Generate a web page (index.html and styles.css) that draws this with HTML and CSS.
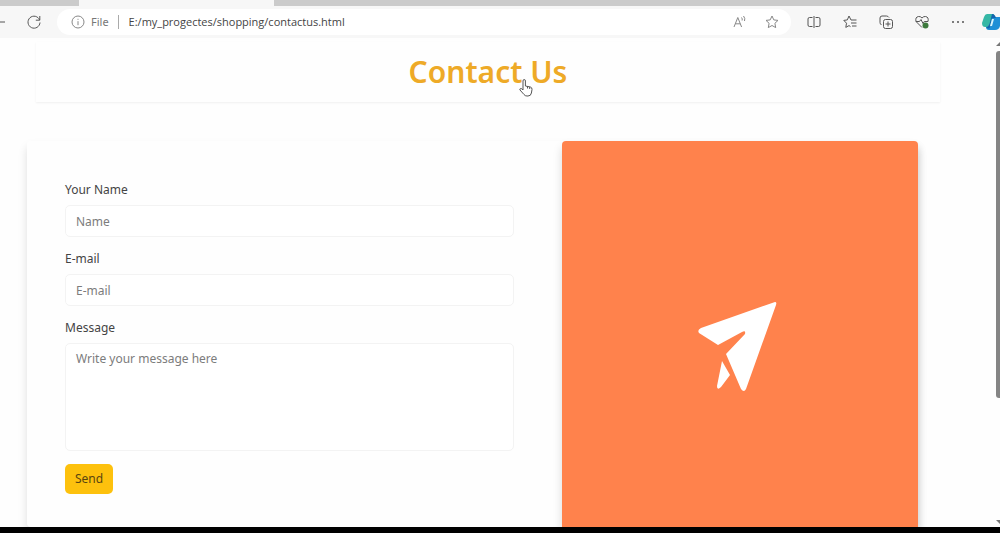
FILE: index.html
```html
<!DOCTYPE html>
<html lang="en">
<head>
    <meta charset="UTF-8">
    <meta name="viewport" content="width=device-width, initial-scale=1.0">
    <title>Contact Us</title>
    <link rel="stylesheet" href="styles.css">
</head>
<body>
    <div class="tabs">
        <div class="tab"></div>
    </div>

    <div class="toolbar">
        <button type="button" class="back" aria-label="Back">
            <svg width="6" height="16" viewBox="0 0 6 16"><path d="M0 8h5"/></svg>
        </button>
        <button type="button" class="reload" aria-label="Reload">
            <svg width="16" height="16" viewBox="0 0 16 16"><path d="M13.6 6A6 6 0 1 0 14 8.500M13.800 2v4.200H9.800"/></svg>
        </button>
        <div class="address">
            <svg width="14" height="14" viewBox="0 0 14 14"><circle cx="7" cy="7" r="6"/><path d="M7 6.200v4M7 3.800v1"/></svg>
            <span class="scheme">File</span>
            <input type="text" class="url" aria-label="Address" value="E:/my_progectes/shopping/contactus.html">
            <button type="button" class="faded" aria-label="Read aloud">
                <svg width="14" height="14" viewBox="0 0 14 14"><path d="M1 12L4.800 2.500l3.800 9.500M2.400 8.800h4.800M8.500 2.500q1.200 1.400.6 3M10.500 1q2 2.400 1 5"/></svg>
            </button>
            <button type="button" class="faded" aria-label="Add to favorites">
                <svg width="14" height="14" viewBox="0 0 14 14"><path d="M7 1l1.800 3.900 4.200.5-3.100 2.900.8 4.300L7 10.500l-3.700 2.100.8-4.300L1 5.400l4.200-.5z"/></svg>
            </button>
        </div>
        <div class="tools">
            <button type="button" aria-label="Split screen">
                <svg width="14" height="14" viewBox="0 0 14 14"><path d="M5.500 2.500h-3Q1 2.500 1 4v6q0 1.500 1.500 1.500h3M8.500 2.500h3Q13 2.500 13 4v6q0 1.500-1.500 1.500h-3M7 1v12"/></svg>
            </button>
            <button type="button" aria-label="Favorites">
                <svg width="14" height="14" viewBox="0 0 14 14"><path d="M8 5L6 1 4.300 4.900.8 5.400l2.700 2.800-.7 4.200L6 10.600M8 5h5.500M8 8h5.500M9 11h4.500M6 10.600l1.500 1"/></svg>
            </button>
            <button type="button" aria-label="Collections">
                <svg width="14" height="14" viewBox="0 0 14 14"><rect x="4.500" y="4.500" width="9" height="9" rx="2"/><path d="M2.500 10Q1 9 1 7.500V3q0-2 2-2h4.500Q9 1 10 2.500M9 6.500v5M6.500 9h5"/></svg>
            </button>
            <button type="button" aria-label="Browser essentials">
                <svg width="14" height="14" viewBox="0 0 14 14"><path d="M13 6.500Q14 2 10.500 1.500 8.500 1.200 7 3 5.500 1.200 3.500 1.500 0 2 1 6.500L7 12.500M1 6.500h3.500l1.500-2 2 4 1.300-2H13"/><circle class="ok" cx="10.500" cy="10.500" r="3"/></svg>
            </button>
            <button type="button" aria-label="More">
                <svg width="14" height="14" viewBox="0 0 14 14"><g class="dots"><circle cx="2" cy="7" r="1"/><circle cx="7" cy="7" r="1"/><circle cx="12" cy="7" r="1"/></g></svg>
            </button>
        </div>
        <button type="button" class="copilot" aria-label="Copilot">
            <svg width="18" height="18" viewBox="0 0 18 18"><path fill="#35b7a5" d="M5 1h7L8 14H3Q0 14 0 10L2 4Q3 1 5 1z"/><path fill="#1d8fd6" d="M10 4h8v9q-1 4-5 4H7q-3 0-3-3h4z"/><path fill="#1465ad" d="M10 1q3 0 4 4h-4L8 14q-1 3-4 0 3 0 4-5z"/><path fill="#d7f4fb" d="M10 6h2l-2 7H8z"/></svg>
        </button>
    </div>

    <div class="viewport">
        <main class="page">
            <h1>Contact Us</h1>

            <div class="contact">
                <form class="contact-form">
                    <label for="name">Your Name</label>
                    <input type="text" id="name" name="name" placeholder="Name">

                    <label for="email">E-mail</label>
                    <input type="email" id="email" name="email" placeholder="E-mail">

                    <label for="message">Message</label>
                    <textarea id="message" name="message" placeholder="Write your message here"></textarea>

                    <button type="submit" class="send">Send</button>
                </form>
                <div class="banner">
                    <svg width="80" height="92" viewBox="0 0 80 92"><path d="M77 1Q79 1 78 4L48 88Q46 92 43 88L28 53 47 33Q48 29 44 31L20 44 1 32Q-1 29 3 27zM24 60l8 14-9 12q-4 4-4-1z"/></svg>
                </div>
            </div>
        </main>
        <div class="scrollbar">
            <span class="arrow-up"></span>
            <span class="thumb"></span>
            <span class="arrow-down"></span>
        </div>
    </div>

    <svg class="cursor" width="14" height="18" viewBox="0 0 14 18"><path d="M4 11V2q0-1.500 1.200-1.500T6.400 2v5l5 1q1.800.5 1.600 2.500l-.6 3.500q-.5 3-3.400 3H8q-2 0-3-1.500L1 11q-.6-1.300.6-1.500T4 11M8.500 7.500v2M10.700 8v2"/></svg>
</body>
</html>
```
FILE: styles.css
```css
* {
    box-sizing: border-box;
}
body {
    display: flex;
    flex-direction: column;
    height: 100vh;
    margin: 0;
    border-bottom: 6px solid #000;
    overflow: hidden;
    font-family: "Noto Sans", "Open Sans", sans-serif;
    font-size: 12px;
    color: #444;
    background-color: #fefefe;
}
button {
    display: flex;
    padding: 0;
    border: none;
    background: none;
    font-family: inherit;
}
svg {
    flex-shrink: 0;
    fill: none;
    stroke: #555;
}

/* Browser bar */
.tabs {
    flex: 0 0 6px;
    padding-left: 79px;
    background-color: #cbcbcb;
}
.tab {
    width: 195px;
    height: 6px;
    background-color: #f7f7f7;
}
.toolbar {
    display: flex;
    flex: 0 0 32px;
    align-items: center;
    background-color: #f7f7f7;
}
.reload {
    margin: 0 15px 0 20px;
}
.address {
    display: flex;
    flex: 1;
    align-items: center;
    height: 26px;
    padding: 0 12px 0 14px;
    border-radius: 13px;
    background-color: #fff;
}
.address svg {
    stroke: #888;
}
.scheme {
    margin-left: 6px;
    padding-right: 9px;
    border-right: 1px solid #aaa;
    font-size: 11px;
    line-height: 14px;
    color: #777;
}
.url {
    flex: 1;
    min-width: 0;
    padding: 0 0 1px 10px;
    border: none;
    outline: none;
    background: none;
    font-family: "Open Sans", sans-serif;
    font-size: 11px;
    color: #444;
}
.faded {
    margin-left: 18px;
}
.tools {
    display: flex;
    gap: 22px;
    padding: 0 17px 0 16px;
}
.ok {
    fill: #3d7a3d;
    stroke: none;
}
.dots {
    fill: #555;
    stroke: none;
}
.copilot svg {
    stroke: none;
}

/* Page */
.viewport {
    display: flex;
    flex: 1;
    min-height: 0;
}
.page {
    display: flex;
    flex: 1;
    flex-direction: column;
    padding: 4px 78px 0 27px;
    overflow: hidden;
}
h1 {
    margin: 0 -22px 39px 9px;
    font-size: 30px;
    font-weight: 600;
    line-height: 60px;
    text-align: center;
    color: #eeaa27;
    box-shadow: 0 1px 2px rgba(0, 0, 0, 0.06);
}
.contact {
    display: grid;
    flex: 1;
    grid-template-columns: 3fr 2fr;
    border-radius: 4px;
    box-shadow: 0 6px 10px rgba(0, 0, 0, 0.13);
}
.contact-form {
    padding: 38px 48px 0 38px;
}
label {
    display: block;
    margin-bottom: 5px;
    line-height: 21px;
}
.contact-form input,
textarea {
    display: block;
    width: 100%;
    height: 32px;
    margin-bottom: 11px;
    padding: 5px 10px;
    border: 1px solid #f3f3f3;
    border-radius: 5px;
    background-color: #fff;
    font-family: inherit;
    font-size: 12px;
    line-height: 20px;
}
.contact-form textarea {
    height: 108px;
    margin-bottom: 13px;
    resize: none;
}
::placeholder {
    color: #7c7c7c;
}
.send {
    padding: 5px 10px;
    border-radius: 5px;
    background-color: #fdc10d;
    font-size: 12px;
    line-height: 20px;
    color: #5a4510;
}
.banner {
    display: flex;
    align-items: center;
    justify-content: center;
    padding: 26px 4px 0 0;
    border-radius: 4px 4px 0 0;
    background-color: #ff824c;
    box-shadow: 0 6px 10px rgba(0, 0, 0, 0.15);
}
.banner svg {
    fill: #fff;
    stroke: none;
}

/* Scrollbar */
.scrollbar {
    display: flex;
    flex: 0 0 4px;
    flex-direction: column;
    padding: 4px 0 3px;
    overflow: hidden;
}
.arrow-up,
.arrow-down {
    width: 8px;
    border: 4px solid transparent;
    border-top: none;
    border-bottom: 4px solid #777;
}
.thumb {
    width: 4px;
    height: 72%;
    margin: 5px 0 auto;
    border-radius: 3px 0 0 3px;
    background-color: #858585;
}
.arrow-down {
    border-top: 4px solid #777;
    border-bottom: none;
}

.cursor {
    position: absolute;
    top: 79px;
    left: 519px;
    fill: #fff;
}
```
